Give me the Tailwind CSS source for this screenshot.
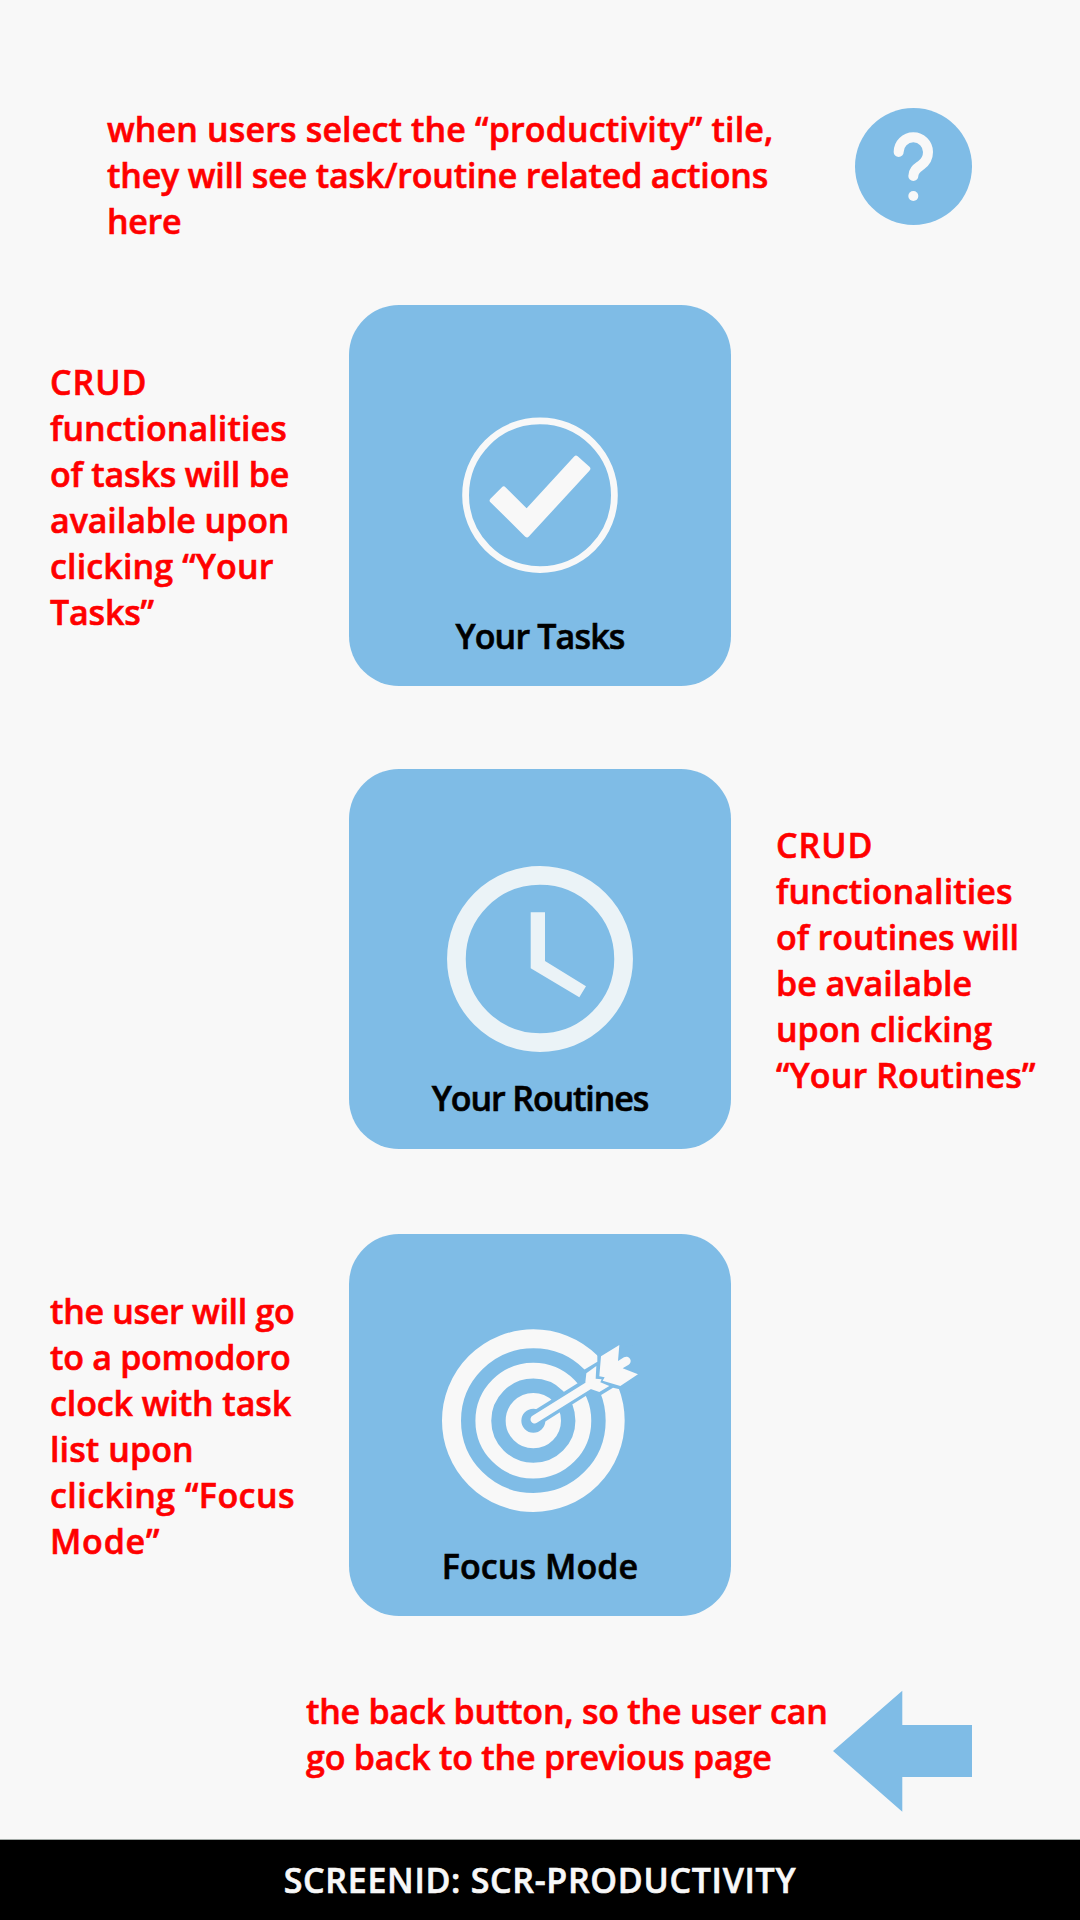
<!DOCTYPE html>
<html lang="en">
<head>
<meta charset="utf-8">
<title>Productivity</title>
<script src="https://cdn.jsdelivr.net/npm/@tailwindcss/browser@4"></script>
</head>
<body class="bg-[#f8f8f8]">
<div class="flex h-[1920px] w-[1080px] flex-col overflow-hidden font-['Open_Sans',sans-serif] text-[34px] leading-[46px] font-semibold whitespace-nowrap text-[#ff0000] [-webkit-text-stroke:0.6px]">

  <header class="flex h-[305px] shrink-0 items-start justify-between pt-[106px] pr-[108px] pl-[107px]">
    <p>
      <span class="block tracking-[0.14px]">when users select the “productivity” tile,</span>
      <span class="block tracking-[-0.18px]">they will see task/routine related actions</span>
      <span class="block tracking-[-0.3px]">here</span>
    </p>
    <button class="mt-[2px]" aria-label="Help">
      <svg class="block h-[117px] w-[117px]" viewBox="0 0 351 351" fill="none">
        <circle cx="175.5" cy="175.5" r="175.5" fill="#7fbce6"/>
        <path d="M131 132a44 44 0 0 1 88 0c0 18-8 30-20 39s-24 15-24 33" stroke="#f8f8f8" stroke-width="30" stroke-linecap="round"/>
        <circle cx="175" cy="264" r="15" fill="#f8f8f8"/>
      </svg>
    </button>
  </header>

  <main class="flex shrink-0 flex-col">
    <section class="grid h-[381px] grid-cols-[349px_382px_349px]">
      <p class="pt-[54px] pl-[50px]">
        <span class="block tracking-[1px]">CRUD</span>
        <span class="block tracking-[0.1px]">functionalities</span>
        <span class="block tracking-[-0.19px]">of tasks will be</span>
        <span class="block tracking-[-0.08px]">available upon</span>
        <span class="block tracking-[0.14px]">clicking “Your</span>
        <span class="block tracking-[-0.2px]">Tasks”</span>
      </p>
      <div class="flex flex-col items-center rounded-[50px] bg-[#7fbce6] pt-[112px]">
        <svg class="block h-[156px] w-[156px]" viewBox="0 0 156 156" fill="none">
          <circle cx="78" cy="78.2" r="74.4" stroke="#f8f8f8" stroke-width="6.8"/>
          <path d="M30.2 83.4 41.7 71.9 64.7 94.9 114 41.2 125.8 51.7 65 117.9Z" fill="#f8f8f8" stroke="#f8f8f8" stroke-width="5" stroke-linejoin="round"/>
        </svg>
        <h2 class="mt-[40px] tracking-[-0.83px] text-black">Your Tasks</h2>
      </div>
    </section>

    <section class="mt-[83px] grid h-[380px] grid-cols-[349px_382px_349px]">
      <div class="col-start-2 flex flex-col items-center rounded-[50px] bg-[#7fbce6] pt-[97px]">
        <svg class="block h-[186px] w-[186px]" viewBox="0 0 186 186" fill="none">
          <circle cx="93" cy="93" r="83.6" stroke="#ebf3f7" stroke-width="18.7"/>
          <path d="M83.7 46.3H98V95L139 120.3 132.3 131.3 83.7 102.3Z" fill="#ebf3f7"/>
        </svg>
        <h2 class="mt-[23px] tracking-[-1.1px] text-black">Your Routines</h2>
      </div>
      <p class="pt-[53px] pl-[45px]">
        <span class="block tracking-[1px]">CRUD</span>
        <span class="block tracking-[0.08px]">functionalities</span>
        <span class="block tracking-[-0.1px]">of routines will</span>
        <span class="block">be available</span>
        <span class="block">upon clicking</span>
        <span class="block tracking-[0.12px]">“Your Routines”</span>
      </p>
    </section>

    <section class="mt-[85px] grid h-[382px] grid-cols-[349px_382px_349px]">
      <p class="pt-[54px] pl-[50px]">
        <span class="block tracking-[-0.3px]">the user will go</span>
        <span class="block tracking-[-0.28px]">to a pomodoro</span>
        <span class="block tracking-[-0.1px]">clock with task</span>
        <span class="block tracking-[0.1px]">list upon</span>
        <span class="block tracking-[0.44px]">clicking “Focus</span>
        <span class="block tracking-[0.79px]">Mode”</span>
      </p>
      <div class="flex flex-col items-center rounded-[50px] bg-[#7fbce6] pt-[95px]">
        <svg class="block h-[184px] w-[196px]" viewBox="36 57 588 552" fill="none">
          <g stroke="#f8f8f8">
            <circle cx="310" cy="332" r="245.5" stroke-width="57"/>
            <circle cx="310" cy="332" r="150" stroke-width="47.5"/>
            <circle cx="310" cy="332" r="59.5" stroke-width="47"/>
          </g>
          <path d="M300 309 450 215 455 184 502 155V125L640 100V250L569 238 549 233 500 263 480 250 340 338 310 345Z" fill="#7fbce6"/>
          <path d="M314 328 480 224" stroke="#f8f8f8" stroke-width="25" stroke-linecap="round"/>
          <path d="M466 217 469 190 499 168 497 206 515 208 511 217 538 228 508 246 482 237Z" fill="#f8f8f8"/>
          <path d="M513 139 568 105 564 153 582 142A12 12 0 0 1 596 164L578 175 624 193 571 228 518 212 524 202 508 199Z" fill="#f8f8f8"/>
        </svg>
        <h2 class="mt-[30px] tracking-[0.1px] text-black">Focus Mode</h2>
      </div>
    </section>
  </main>

  <div class="flex flex-1 items-start justify-end pr-[108px]">
    <p class="w-[527px] pt-[72px]">
      <span class="block tracking-[-0.22px]">the back button, so the user can</span>
      <span class="block tracking-[-0.2px]">go back to the previous page</span>
    </p>
    <button class="mt-[74px]" aria-label="Back">
      <svg class="block h-[122px] w-[139px]" viewBox="0 0 139 122"><path d="M0 61.1 69.3.7V35H139V87H69.3V121.7Z" fill="#7fbce6"/></svg>
    </button>
  </div>

  <footer class="h-[81px] shrink-0 border-t border-[#a3aaa6] bg-black pt-[17px] text-center tracking-[0.7px] text-[#f8f8f8]">SCREENID: SCR-PRODUCTIVITY</footer>
</div>
</body>
</html>
